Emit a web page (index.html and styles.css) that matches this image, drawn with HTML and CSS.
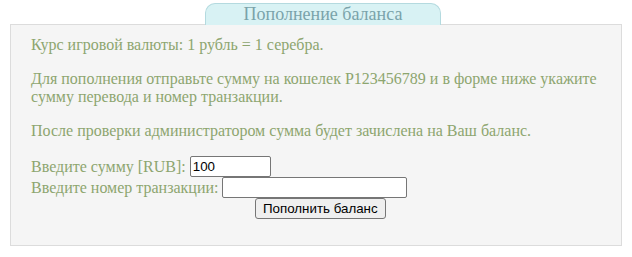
FILE: index.html
```html
<!DOCTYPE html>
<html lang="ru">
<head>
  <meta charset="UTF-8">
  <title>Пополнение баланса</title>
  <link rel="stylesheet" href="styles.css">
</head>
<body>
  <div class="wrap">
    <!-- Tab title -->
    <div class="tab-row">
      <div class="tab">Пополнение баланса</div>
    </div>

    <div class="box">
      <p>Курс игровой валюты: 1 рубль = 1 серебра.</p>
      <p>Для пополнения отправьте сумму на кошелек P123456789 и в форме ниже укажите сумму перевода и номер транзакции.</p>
      <p>После проверки администратором сумма будет зачислена на Ваш баланс.</p>

      <form class="pay-form">
        <div class="row">
          <label for="sum">Введите сумму [RUB]:</label>
          <input type="text" id="sum" class="sum" value="100">
        </div>
        <div class="row">
          <label for="trans">Введите номер транзакции:</label>
          <input type="text" id="trans" class="trans">
        </div>
        <div class="row btn-row">
          <button type="button">Пополнить баланс</button>
        </div>
      </form>
    </div>
  </div>
</body>
</html>
```

FILE: styles.css
```css
body {
  margin: 0;
  font-family: "Liberation Serif", serif;
  font-size: 16px;
  background: white;
}

.wrap {
  padding: 3px 10px 0 10px;
  width: 612px;
}

.tab-row {
  display: flex;
  padding-left: 195px;
  margin-bottom: -1px;
  position: relative;
}

.tab {
  width: 234px;
  height: 21px;
  line-height: 21px;
  text-align: center;
  font-size: 18px;
  color: #7aa3aa;
  background-color: #d8f2f4;
  border: 1px solid #b4dadf;
  border-bottom: none;
  border-radius: 10px 10px 0 0;
}

.box {
  border: 1px solid #dcdcdc;
  background-color: #f5f5f5;
  padding: 11px 20px 26px 20px;
  color: #8da56f;
}

.box p {
  margin: 0 0 16px 0;
}

.pay-form .row {
  display: flex;
  align-items: center;
  height: 21px;
}

.pay-form label {
  margin-right: 4px;
}

.pay-form input {
  font-family: "Liberation Sans", sans-serif;
  font-size: 13.33px;
  height: 21px;
  box-sizing: border-box;
  padding: 1px 2px;
  border: 1px solid #767676;
  border-radius: 2px;
  background: white;
}

.sum {
  width: 81px;
}

.trans {
  width: 185px;
}

.btn-row {
  padding-left: 224px;
}

.pay-form button {
  font-family: "Liberation Sans", sans-serif;
  font-size: 13.33px;
  height: 21px;
  padding: 1px 7px;
  border: 1px solid #767676;
  border-radius: 3px;
  background: #efefef;
  color: black;
}
```
